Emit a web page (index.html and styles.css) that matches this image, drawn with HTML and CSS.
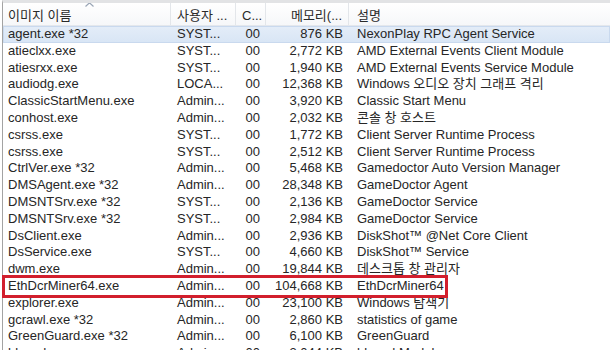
FILE: index.html
```html
<!DOCTYPE html>
<html lang="ko">
<head>
    <meta charset="UTF-8">
    <title>Windows 작업 관리자 - 프로세스</title>
    <link rel="stylesheet" href="styles.css">
</head>
<body>
    <div class="listview">
        <div class="row head">
            <div class="cell sorted">이미지 이름
                <svg class="sort-arrow" width="9" height="5" viewBox="0 0 9 5"><polyline points="0.5,4.5 4.5,0.8 8.5,4.5" fill="none" stroke="#9aa6b6" stroke-width="1.2"/></svg>
            </div>
            <div class="cell">사용자 ...</div>
            <div class="cell num">C...</div>
            <div class="cell num">메모리(...</div>
            <div class="cell">설명</div>
        </div>

        <div class="row selected">
            <div class="cell">agent.exe *32</div><div class="cell">SYST...</div><div class="cell num">00</div><div class="cell num">876 KB</div><div class="cell">NexonPlay RPC Agent Service</div>
        </div>
        <div class="row">
            <div class="cell">atieclxx.exe</div><div class="cell">SYST...</div><div class="cell num">00</div><div class="cell num">2,772 KB</div><div class="cell">AMD External Events Client Module</div>
        </div>
        <div class="row">
            <div class="cell">atiesrxx.exe</div><div class="cell">SYST...</div><div class="cell num">00</div><div class="cell num">1,940 KB</div><div class="cell">AMD External Events Service Module</div>
        </div>
        <div class="row">
            <div class="cell">audiodg.exe</div><div class="cell">LOCA...</div><div class="cell num">00</div><div class="cell num">12,368 KB</div><div class="cell">Windows 오디오 장치 그래프 격리</div>
        </div>
        <div class="row">
            <div class="cell">ClassicStartMenu.exe</div><div class="cell">Admin...</div><div class="cell num">00</div><div class="cell num">3,920 KB</div><div class="cell">Classic Start Menu</div>
        </div>
        <div class="row">
            <div class="cell">conhost.exe</div><div class="cell">Admin...</div><div class="cell num">00</div><div class="cell num">2,032 KB</div><div class="cell">콘솔 창 호스트</div>
        </div>
        <div class="row">
            <div class="cell">csrss.exe</div><div class="cell">SYST...</div><div class="cell num">00</div><div class="cell num">1,772 KB</div><div class="cell">Client Server Runtime Process</div>
        </div>
        <div class="row">
            <div class="cell">csrss.exe</div><div class="cell">SYST...</div><div class="cell num">00</div><div class="cell num">2,512 KB</div><div class="cell">Client Server Runtime Process</div>
        </div>
        <div class="row">
            <div class="cell">CtrlVer.exe *32</div><div class="cell">Admin...</div><div class="cell num">00</div><div class="cell num">5,468 KB</div><div class="cell">Gamedoctor Auto Version Manager</div>
        </div>
        <div class="row">
            <div class="cell">DMSAgent.exe *32</div><div class="cell">Admin...</div><div class="cell num">00</div><div class="cell num">28,348 KB</div><div class="cell">GameDoctor Agent</div>
        </div>
        <div class="row">
            <div class="cell">DMSNTSrv.exe *32</div><div class="cell">SYST...</div><div class="cell num">00</div><div class="cell num">2,136 KB</div><div class="cell">GameDoctor Service</div>
        </div>
        <div class="row">
            <div class="cell">DMSNTSrv.exe *32</div><div class="cell">SYST...</div><div class="cell num">00</div><div class="cell num">2,984 KB</div><div class="cell">GameDoctor Service</div>
        </div>
        <div class="row">
            <div class="cell">DsClient.exe</div><div class="cell">Admin...</div><div class="cell num">00</div><div class="cell num">2,936 KB</div><div class="cell">DiskShot™ @Net Core Client</div>
        </div>
        <div class="row">
            <div class="cell">DsService.exe</div><div class="cell">SYST...</div><div class="cell num">00</div><div class="cell num">4,660 KB</div><div class="cell">DiskShot™ Service</div>
        </div>
        <div class="row">
            <div class="cell">dwm.exe</div><div class="cell">Admin...</div><div class="cell num">00</div><div class="cell num">19,844 KB</div><div class="cell">데스크톱 창 관리자</div>
        </div>
        <div class="row marked">
            <div class="cell">EthDcrMiner64.exe</div><div class="cell">Admin...</div><div class="cell num">00</div><div class="cell num">104,668 KB</div><div class="cell">EthDcrMiner64</div>
        </div>
        <div class="row">
            <div class="cell">explorer.exe</div><div class="cell">Admin...</div><div class="cell num">00</div><div class="cell num">23,100 KB</div><div class="cell">Windows 탐색기</div>
        </div>
        <div class="row">
            <div class="cell">gcrawl.exe *32</div><div class="cell">Admin...</div><div class="cell num">00</div><div class="cell num">2,860 KB</div><div class="cell">statistics of game</div>
        </div>
        <div class="row">
            <div class="cell">GreenGuard.exe *32</div><div class="cell">Admin...</div><div class="cell num">00</div><div class="cell num">6,100 KB</div><div class="cell">GreenGuard</div>
        </div>
        <div class="row">
            <div class="cell">hkcmd.exe</div><div class="cell">Admin...</div><div class="cell num">00</div><div class="cell num">3,044 KB</div><div class="cell">hkcmd Module</div>
        </div>
    </div>
</body>
</html>
```

FILE: styles.css
```css
body {
    margin: 0;
    padding: 0 0 0 2px;
    background-color: white;
    font-family: 'Liberation Sans', Arial, 'Noto Sans CJK KR', sans-serif;
    font-size: 13px;
    color: #262626;
    overflow: hidden;
    height: 350px;
}
.listview {
    border-left: 1px solid #a3a3a3;
    border-top: 3px solid #e2e3e5;
}
.row {
    display: grid;
    grid-template-columns: 168px 65px 30px 83px 1fr;
    height: 16.8px;
    line-height: 16.8px;
    white-space: nowrap;
}
.cell {
    padding: 0 6px;
    overflow: hidden;
}
.num {
    text-align: right;
}
.head {
    height: 23px;
    line-height: 25px;
    background: linear-gradient(#ffffff, #f6f7f9);
    border-bottom: 1px solid #e4e7ec;
    box-sizing: border-box;
    color: #2a2a2a;
}
.head .cell {
    border-right: 1px solid #e3e6ea;
}
.head .cell:last-child {
    border-right: none;
}
.sorted {
    position: relative;
    padding-left: 5px;
}
.sort-arrow {
    position: absolute;
    left: 82px;
    top: -1px;
}
.row .cell:first-child {
    padding-left: 5px;
}
.row .cell:last-child {
    padding-left: 8px;
}
.selected {
    background: linear-gradient(#e4edf8, #d8e5f5);
    box-shadow: inset 0 0 0 1px #c9d9ee;
}
.marked {
    position: relative;
}
.marked::after {
    content: '';
    position: absolute;
    left: -1px;
    top: -3px;
    width: 440px;
    height: 17px;
    border: 3px solid #d21f2d;
}
```
